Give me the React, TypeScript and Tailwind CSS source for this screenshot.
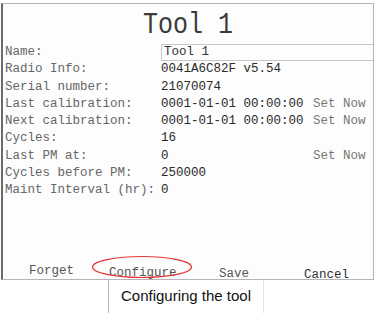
import React from 'react';

type Row = { label: string; value: string; action?: string };

const rows: Row[] = [
  { label: 'Radio Info:', value: '0041A6C82F v5.54' },
  { label: 'Serial number:', value: '21070074' },
  { label: 'Last calibration:', value: '0001-01-01 00:00:00', action: 'Set Now' },
  { label: 'Next calibration:', value: '0001-01-01 00:00:00', action: 'Set Now' },
  { label: 'Cycles:', value: '16' },
  { label: 'Last PM at:', value: '0', action: 'Set Now' },
  { label: 'Cycles before PM:', value: '250000' },
  { label: 'Maint Interval (hr):', value: '0' },
];

export default function App() {
  return (
    <div className="w-[377px] h-[313px] bg-white overflow-hidden font-['Liberation_Mono','DejaVu_Sans_Mono',monospace]">
      <div className="ml-[1px] mt-[3px] w-[373px] h-[277px] border-l-2 border-l-[#6b6b6b] border-t border-r border-b border-[#b4b4b4] bg-[#fdfdfd] flex flex-col">
        <div className="h-[39px] flex items-center justify-center text-[25px] leading-none text-[#3a3a3a] pt-[2px] scale-y-[1.2]">
          Tool 1
        </div>

        <div className="flex items-center h-[18px] text-[12.5px] leading-none">
          <span className="w-[158px] pl-[2px] text-[#666]">Name:</span>
          <div className="flex-1 h-[17px] border border-r-0 border-[#c8c8c8] flex items-center pl-[2px] text-[#333]">
            Tool 1
          </div>
        </div>

        {rows.map((r) => (
          <div key={r.label} className="flex items-center h-[17.25px] text-[12.5px] leading-none">
            <span className="w-[158px] pl-[2px] text-[#666] whitespace-nowrap">{r.label}</span>
            <span className="w-[152px] text-[#2a2a2a] whitespace-nowrap">{r.value}</span>
            {r.action && <span className="text-[#777] whitespace-nowrap">{r.action}</span>}
          </div>
        ))}

        <div className="flex-1" />

        <div className="relative h-[22px] text-[12.5px] leading-none text-[#555]">
          <span className="absolute left-[26px] top-[8px]">Forget</span>
          <span className="absolute left-[106px] top-[10px]">Configure</span>
          <span className="absolute left-[216px] top-[11px]">Save</span>
          <span className="absolute left-[301px] top-[12px] text-[#333]">Cancel</span>
          <svg className="absolute left-[88px] top-[-2px]" width="102" height="24" viewBox="0 0 102 24">
            <ellipse cx="51" cy="12" rx="49.5" ry="10.5" fill="none" stroke="#e53935" strokeWidth="1.2" />
          </svg>
        </div>
      </div>

      <div className="ml-[108px] w-[156px] h-[33px] border-l border-r border-l-[#b8b8b8] border-r-[#e4e4e4] flex items-center justify-center text-[15px] text-[#111] font-['Liberation_Sans',Arial,sans-serif]">
        Configuring the tool
      </div>
    </div>
  );
}
